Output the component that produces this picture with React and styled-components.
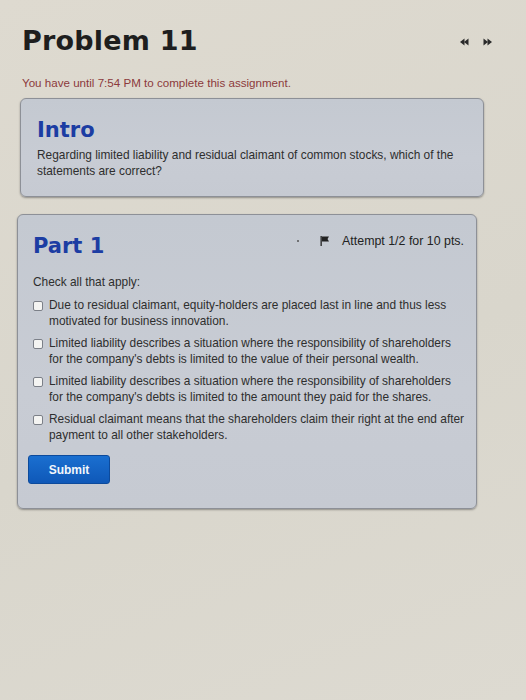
import styled, { createGlobalStyle } from "styled-components";

const GlobalStyle = createGlobalStyle`
  html, body {
    margin: 0;
    padding: 0;
    background-color: #dbd8cf;
    font-family: "Liberation Sans", Arial, sans-serif;
    color: #2c2c2c;
  }
`;

const Page = styled.div`
  width: 526px;
  min-height: 700px;
  padding-top: 22px;
  box-sizing: border-box;
  background: linear-gradient(160deg, #dedad0 0%, #d9d6cc 55%, #dddad1 100%);
`;

const TitleBar = styled.div`
  display: flex;
  align-items: center;
  justify-content: space-between;
  padding: 0 34px 0 22px;
  height: 36px;
`;

const Title = styled.h1`
  margin: 0;
  font-family: "DejaVu Sans", sans-serif;
  font-weight: 700;
  font-size: 27px;
  color: #1e1e1e;
  letter-spacing: 0.2px;
`;

const NavArrows = styled.div`
  display: flex;
  gap: 14px;
  align-items: center;
  padding-top: 4px;
`;

const Deadline = styled.p`
  margin: 18px 0 0 22px;
  font-size: 11.6px;
  line-height: 14px;
  color: #8c3a3c;
`;

const Card = styled.section`
  margin: ${(p) => p.$margin};
  width: ${(p) => p.$width}px;
  box-sizing: border-box;
  padding: ${(p) => p.$padding};
  background: linear-gradient(180deg, #c4c9d1 0%, #c8ccd4 60%, #c6cad2 100%);
  border: 1px solid #8d9097;
  border-radius: 6px;
  box-shadow: 0 1px 2px rgba(0, 0, 0, 0.35);
`;

const CardHead = styled.div`
  display: flex;
  align-items: center;
  justify-content: space-between;
`;

const Heading = styled.h2`
  margin: 0;
  font-family: "DejaVu Sans", sans-serif;
  font-weight: 700;
  font-size: 21px;
  line-height: 28px;
  color: #1c3da3;
`;

const Attempt = styled.div`
  display: flex;
  align-items: center;
  font-size: 12.4px;
  color: #222;
  margin-top: -10px;
`;

const Dot = styled.span`
  width: 2px;
  height: 2px;
  border-radius: 50%;
  background: #555;
  margin-right: 21px;
`;

const Text = styled.p`
  margin: ${(p) => p.$margin || "0"};
  font-size: 11.9px;
  line-height: 16px;
  color: #2e2e2e;
  max-width: ${(p) => p.$max || 440}px;
`;

const Options = styled.ul`
  list-style: none;
  margin: 8px 0 0;
  padding: 0;
  display: flex;
  flex-direction: column;
  gap: 7px;
`;

const Option = styled.li`
  display: flex;
  align-items: flex-start;
  gap: 6px;
  font-size: 11.9px;
  line-height: 15.5px;
  color: #2e2e2e;
`;

const Box = styled.span`
  flex: none;
  width: 8px;
  height: 8px;
  margin-top: 3px;
  border: 1px solid #7c8088;
  border-radius: 2px;
  background: #f4f4f2;
`;

const OptionText = styled.span`
  display: flex;
  flex-direction: column;
  white-space: nowrap;
`;

const SubmitButton = styled.button`
  margin-top: 12px;
  margin-left: -5px;
  width: 82px;
  height: 29px;
  border: 1px solid #0c4a9c;
  border-radius: 3px;
  background: linear-gradient(180deg, #1a6fd0 0%, #0f58b8 100%);
  color: #f2f6fb;
  font-family: "Liberation Sans", Arial, sans-serif;
  font-size: 12px;
  font-weight: 700;
  cursor: pointer;
`;

const Arrow = ({ dir }) => (
  <svg width="9" height="8" viewBox="0 0 9 8">
    {dir === "left" ? (
      <g fill="#2a2a2a">
        <polygon points="0,4 4.5,0.5 4.5,7.5" />
        <polygon points="4,4 8.5,0.5 8.5,7.5" />
      </g>
    ) : (
      <g fill="#2a2a2a">
        <polygon points="9,4 4.5,0.5 4.5,7.5" />
        <polygon points="5,4 0.5,0.5 0.5,7.5" />
      </g>
    )}
  </svg>
);

const Flag = () => (
  <svg width="10" height="10" viewBox="0 0 10 10" style={{ marginRight: 12 }}>
    <rect x="0.5" y="0" width="1.3" height="10" fill="#222" />
    <path d="M2 0.5 L9 0.5 L7.5 3 L9 5.5 L2 5.5 Z" fill="#222" />
  </svg>
);

const options = [
  [
    "Due to residual claimant, equity-holders are placed last in line and thus less",
    "motivated for business innovation.",
  ],
  [
    "Limited liability describes a situation where the responsibility of shareholders",
    "for the company's debts is limited to the value of their personal wealth.",
  ],
  [
    "Limited liability describes a situation where the responsibility of shareholders",
    "for the company's debts is limited to the amount they paid for the shares.",
  ],
  [
    "Residual claimant means that the shareholders claim their right at the end after",
    "payment to all other stakeholders.",
  ],
];

export default function App() {
  return (
    <>
      <GlobalStyle />
      <Page>
        <TitleBar>
          <Title>Problem 11</Title>
          <NavArrows>
            <Arrow dir="left" />
            <Arrow dir="right" />
          </NavArrows>
        </TitleBar>
        <Deadline>You have until 7:54 PM to complete this assignment.</Deadline>

        <Card $margin="8px 0 0 20px" $width={464} $padding="17px 16px 17px 16px">
          <Heading>Intro</Heading>
          <Text $margin="3px 0 0" $max={440}>
            Regarding limited liability and residual claimant of common stocks, which of the
            statements are correct?
          </Text>
        </Card>

        <Card $margin="17px 0 0 17px" $width={460} $padding="17px 12px 24px 15px">
          <CardHead>
            <Heading>Part 1</Heading>
            <Attempt>
              <Dot />
              <Flag />
              Attempt 1/2 for 10 pts.
            </Attempt>
          </CardHead>
          <Text $margin="14px 0 0">Check all that apply:</Text>
          <Options>
            {options.map((lines) => (
              <Option key={lines[0] + lines[1]}>
                <Box />
                <OptionText>
                  {lines.map((l) => (
                    <span key={l}>{l}</span>
                  ))}
                </OptionText>
              </Option>
            ))}
          </Options>
          <SubmitButton>Submit</SubmitButton>
        </Card>
      </Page>
    </>
  );
}
